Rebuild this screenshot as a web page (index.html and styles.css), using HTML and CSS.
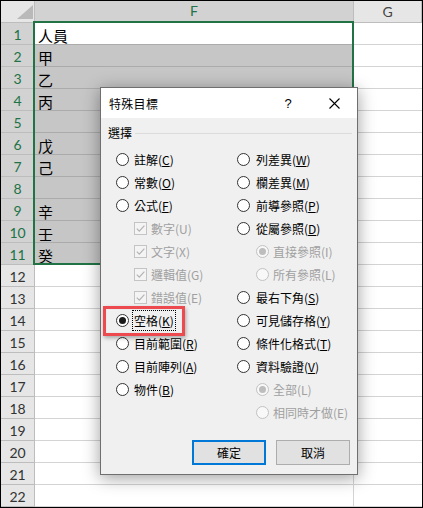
FILE: index.html
```html
<!DOCTYPE html>
<html lang="zh-Hant">
<head>
<meta charset="utf-8">
<title>特殊目標</title>
<link rel="stylesheet" href="styles.css">
</head>
<body>
<div class="frame">
  <div class="sheet">
    <div class="corner"><svg class="tri" width="16" height="14" viewBox="0 0 16 14"><polygon points="16,0 16,14 0,14" fill="#b9b9b9"/></svg></div>
    <div class="ch sel">F</div>
    <div class="ch">G</div>

    <div class="rh sel">1</div><div class="cf active">人員</div><div class="cg"></div>
    <div class="rh sel">2</div><div class="cf sel">甲</div><div class="cg"></div>
    <div class="rh sel">3</div><div class="cf sel">乙</div><div class="cg"></div>
    <div class="rh sel">4</div><div class="cf sel">丙</div><div class="cg"></div>
    <div class="rh sel">5</div><div class="cf sel"></div><div class="cg"></div>
    <div class="rh sel">6</div><div class="cf sel">戊</div><div class="cg"></div>
    <div class="rh sel">7</div><div class="cf sel">己</div><div class="cg"></div>
    <div class="rh sel">8</div><div class="cf sel"></div><div class="cg"></div>
    <div class="rh sel">9</div><div class="cf sel">辛</div><div class="cg"></div>
    <div class="rh sel">10</div><div class="cf sel">壬</div><div class="cg"></div>
    <div class="rh sel">11</div><div class="cf sel">癸</div><div class="cg"></div>
    <div class="rh">12</div><div class="cf"></div><div class="cg"></div>
    <div class="rh">13</div><div class="cf"></div><div class="cg"></div>
    <div class="rh">14</div><div class="cf"></div><div class="cg"></div>
    <div class="rh">15</div><div class="cf"></div><div class="cg"></div>
    <div class="rh">16</div><div class="cf"></div><div class="cg"></div>
    <div class="rh">17</div><div class="cf"></div><div class="cg"></div>
    <div class="rh">18</div><div class="cf"></div><div class="cg"></div>
    <div class="rh">19</div><div class="cf"></div><div class="cg"></div>
    <div class="rh">20</div><div class="cf"></div><div class="cg"></div>
    <div class="rh">21</div><div class="cf"></div><div class="cg"></div>
    <div class="rh">22</div><div class="cf"></div><div class="cg"></div>
  </div>

  <div class="selection"></div>

  <div class="dialog">
    <div class="titlebar">
      <span class="title">特殊目標</span>
      <span class="tbtn help">?</span>
      <span class="tbtn close"><svg width="11" height="11" viewBox="0 0 11 11"><path d="M0.5 0.5 L10.5 10.5 M10.5 0.5 L0.5 10.5" stroke="#000" stroke-width="1.1" fill="none"/></svg></span>
    </div>
    <div class="dbody">
      <div class="group"><span class="glabel">選擇</span><span class="rule"></span></div>
      <div class="options">
        <div class="col">
          <div class="opt"><span class="radio"></span><span class="lbl">註解(<u>C</u>)</span></div>
          <div class="opt"><span class="radio"></span><span class="lbl">常數(<u>O</u>)</span></div>
          <div class="opt"><span class="radio"></span><span class="lbl">公式(<u>F</u>)</span></div>
          <div class="opt sub"><span class="check"><svg width="11" height="11" viewBox="0 0 11 11"><path d="M1.8 5.6 L4.3 8.1 L9.4 2.6" stroke="#b3b3b3" stroke-width="1.2" fill="none"/></svg></span><span class="lbl dis">數字(U)</span></div>
          <div class="opt sub"><span class="check"><svg width="11" height="11" viewBox="0 0 11 11"><path d="M1.8 5.6 L4.3 8.1 L9.4 2.6" stroke="#b3b3b3" stroke-width="1.2" fill="none"/></svg></span><span class="lbl dis">文字(X)</span></div>
          <div class="opt sub"><span class="check"><svg width="11" height="11" viewBox="0 0 11 11"><path d="M1.8 5.6 L4.3 8.1 L9.4 2.6" stroke="#b3b3b3" stroke-width="1.2" fill="none"/></svg></span><span class="lbl dis">邏輯值(G)</span></div>
          <div class="opt sub"><span class="check"><svg width="11" height="11" viewBox="0 0 11 11"><path d="M1.8 5.6 L4.3 8.1 L9.4 2.6" stroke="#b3b3b3" stroke-width="1.2" fill="none"/></svg></span><span class="lbl dis">錯誤值(E)</span></div>
          <div class="opt"><span class="radio on"></span><span class="lbl focus">空格(<u>K</u>)</span></div>
          <div class="opt"><span class="radio"></span><span class="lbl">目前範圍(<u>R</u>)</span></div>
          <div class="opt"><span class="radio"></span><span class="lbl">目前陣列(<u>A</u>)</span></div>
          <div class="opt"><span class="radio"></span><span class="lbl">物件(<u>B</u>)</span></div>
        </div>
        <div class="col">
          <div class="opt"><span class="radio"></span><span class="lbl wide">列差異(<u>W</u>)</span></div>
          <div class="opt"><span class="radio"></span><span class="lbl wide">欄差異(<u>M</u>)</span></div>
          <div class="opt"><span class="radio"></span><span class="lbl wide">前導參照(<u>P</u>)</span></div>
          <div class="opt"><span class="radio"></span><span class="lbl wide">從屬參照(<u>D</u>)</span></div>
          <div class="opt sub2"><span class="radio dis on"></span><span class="lbl dis">直接參照(I)</span></div>
          <div class="opt sub2"><span class="radio dis"></span><span class="lbl dis">所有參照(L)</span></div>
          <div class="opt"><span class="radio"></span><span class="lbl wide">最右下角(<u>S</u>)</span></div>
          <div class="opt"><span class="radio"></span><span class="lbl wide">可見儲存格(<u>Y</u>)</span></div>
          <div class="opt"><span class="radio"></span><span class="lbl wide">條件化格式(<u>T</u>)</span></div>
          <div class="opt"><span class="radio"></span><span class="lbl wide">資料驗證(<u>V</u>)</span></div>
          <div class="opt sub2"><span class="radio dis on"></span><span class="lbl dis">全部(L)</span></div>
          <div class="opt sub2"><span class="radio dis"></span><span class="lbl dis">相同時才做(E)</span></div>
        </div>
      </div>
      <div class="buttons">
        <button class="btn primary">確定</button>
        <button class="btn">取消</button>
      </div>
    </div>
  </div>

  <div class="callout"></div>
</div>
</body>
</html>
```

FILE: styles.css
```css
* {
  box-sizing: border-box;
}

body {
  margin: 0;
  background: #ffffff;
}

.frame {
  position: relative;
  width: 423px;
  height: 508px;
  border: 1px solid #000000;
  overflow: hidden;
  background: #ffffff;
  font-family: Lato, "Noto Sans CJK TC", sans-serif;
}

/* ---------- spreadsheet ---------- */
.sheet {
  display: grid;
  grid-template-columns: 34px 319px 68px;
  grid-template-rows: repeat(23, 22px);
}

.corner {
  background: #e6e6e6;
  border-right: 1px solid #bdbdbd;
  border-bottom: 1px solid #bdbdbd;
  display: flex;
  align-items: flex-end;
  justify-content: flex-end;
  padding: 0 1px 3px 0;
}

.tri {
  display: block;
}

.ch {
  background: #e6e6e6;
  border-right: 1px solid #bdbdbd;
  border-bottom: 1px solid #bdbdbd;
  display: flex;
  align-items: center;
  justify-content: center;
  font-size: 14px;
  color: #444444;
  padding-bottom: 1px;
}

.ch.sel {
  background: #d2d2d2;
  color: #217346;
  border-bottom: 2px solid #217346;
}

.rh {
  background: #e6e6e6;
  border-right: 1px solid #bdbdbd;
  border-bottom: 1px solid #bdbdbd;
  text-align: center;
  font-size: 14px;
  line-height: 21px;
  padding-top: 1px;
  color: #333333;
}

.rh.sel {
  background: #d2d2d2;
  color: #217346;
}

.cf {
  border-right: 1px solid #d4d4d4;
  border-bottom: 1px solid #d4d4d4;
  background: #ffffff;
  font-family: "Noto Sans CJK TC", sans-serif;
  font-size: 15px;
  line-height: 21px;
  padding: 2px 0 0 3px;
  color: #000000;
  overflow: hidden;
}

.cf.active {
  border-bottom-color: #ababab;
}

.cf.sel {
  background: #c6c6c6;
  border-bottom-color: #ababab;
}

.cg {
  border-bottom: 1px solid #d4d4d4;
  background: #ffffff;
}

.selection {
  position: absolute;
  left: 32px;
  top: 20px;
  width: 321px;
  height: 244px;
  border: 2px solid #217346;
}

/* ---------- dialog ---------- */
.dialog {
  position: absolute;
  left: 99px;
  top: 86px;
  width: 258px;
  height: 388px;
  border: 1px solid #6f6f6f;
  background: #f0f0f0;
  box-shadow: 0 3px 16px rgba(0, 0, 0, 0.38);
  display: flex;
  flex-direction: column;
  font-family: "Noto Sans CJK TC", sans-serif;
  font-size: 12px;
  color: #000000;
}

.titlebar {
  height: 30px;
  flex: none;
  background: #ffffff;
  display: flex;
  align-items: center;
  padding-left: 8px;
}

.title {
  flex: 1;
  font-size: 12px;
  letter-spacing: 0.3px;
}

.tbtn {
  width: 46px;
  height: 30px;
  display: flex;
  align-items: center;
  justify-content: center;
}

.help {
  font-family: "Liberation Sans", sans-serif;
  font-size: 13px;
}

.close svg {
  display: block;
}

.dbody {
  flex: 1;
  display: flex;
  flex-direction: column;
  padding: 7px 7px 9px 7px;
}

.group {
  display: flex;
  align-items: center;
  height: 16px;
  line-height: 16px;
  padding-right: 0;
}

.glabel {
  flex: none;
}

.rule {
  flex: 1;
  height: 1px;
  background: #dcdcdc;
  margin-left: 3px;
  margin-right: -2px;
}

.options {
  display: grid;
  grid-template-columns: 121px 1fr;
  padding-left: 8px;
  margin-top: 7px;
}

.col {
  display: flex;
  flex-direction: column;
}

.opt {
  height: 23px;
  display: flex;
  align-items: center;
  white-space: nowrap;
}

.opt.sub {
  padding-left: 18px;
}

.opt.sub2 {
  padding-left: 19px;
}

.radio {
  flex: none;
  width: 13px;
  height: 13px;
  border: 1px solid #333333;
  border-radius: 50%;
  background: #ffffff;
  display: flex;
  align-items: center;
  justify-content: center;
}

.radio.on::after {
  content: "";
  width: 7px;
  height: 7px;
  border-radius: 50%;
  background: #1a1a1a;
}

.radio.dis {
  border-color: #c2c2c2;
  background: #f8f8f8;
}

.radio.dis.on::after {
  background: #bdbdbd;
}

.check {
  flex: none;
  width: 13px;
  height: 13px;
  border: 1px solid #c4c4c4;
  background: #f4f4f4;
}

.check svg {
  display: block;
}

.lbl {
  margin-left: 5px;
  line-height: 16px;
}

.lbl.wide {
  margin-left: 6px;
}

.opt.sub .lbl,
.opt.sub2 .lbl {
  margin-left: 4px;
}

.lbl.dis {
  color: #a0a0a0;
}

.lbl u {
  text-decoration: underline;
  text-underline-offset: 1px;
}

.lbl.focus {
  margin-left: 3px;
  padding: 1px 1px 1px 1px;
  border: 1px dotted #000000;
  line-height: 17px;
}

.buttons {
  margin-top: auto;
  display: flex;
  justify-content: flex-end;
  gap: 10px;
}

.btn {
  width: 74px;
  height: 25px;
  background: #e1e1e1;
  border: 1px solid #adadad;
  font-family: "Noto Sans CJK TC", sans-serif;
  font-size: 12px;
  color: #000000;
  padding: 0;
  margin: 0;
}

.btn.primary {
  border: 2px solid #0078d7;
}

/* ---------- red highlight ---------- */
.callout {
  position: absolute;
  left: 102px;
  top: 305px;
  width: 82px;
  height: 30px;
  border: 3px solid #ec4a4e;
  box-shadow: 1px 2px 4px rgba(0, 0, 0, 0.3), inset 0 0 1px rgba(0, 0, 0, 0.2);
}
```
